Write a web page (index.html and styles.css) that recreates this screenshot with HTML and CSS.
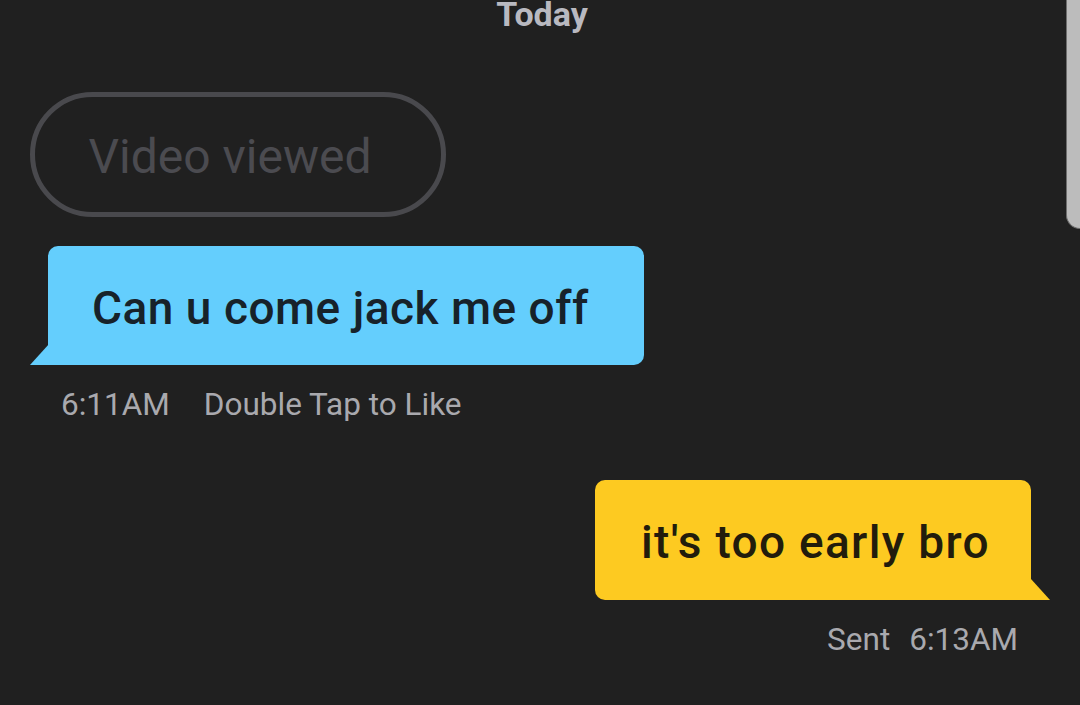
FILE: index.html
```html
<!DOCTYPE html>
<html>
<head>
<meta charset="utf-8">
<link rel="stylesheet" href="styles.css">
</head>
<body>
<div class="chat">
  <div class="day">Today</div>
  <div class="pill">Video viewed</div>
  <div class="msg in">
    <div class="bubble blue">Can u come jack me off</div>
    <div class="meta"><span>6:11AM</span><span>Double Tap to Like</span></div>
  </div>
  <div class="msg out">
    <div class="bubble yellow">it's too early bro</div>
    <div class="meta"><span>Sent</span><span>6:13AM</span></div>
  </div>
</div>
<div class="scrollbar"></div>
</body>
</html>
```
FILE: styles.css
```css
html, body {
  margin: 0;
  padding: 0;
  background: #202020;
  width: 1080px;
  height: 705px;
  overflow: hidden;
}
body {
  font-family: Roboto, "DejaVu Sans", sans-serif;
  position: relative;
}
.chat {
  display: flex;
  flex-direction: column;
}
.day {
  align-self: center;
  font-weight: 700;
  font-size: 34px;
  line-height: 34px;
  color: #b9b9c0;
  margin-top: -3px;
  margin-left: 4px;
}
.pill {
  align-self: flex-start;
  margin: 61px 0 0 30px;
  box-sizing: border-box;
  width: 416px;
  height: 125px;
  border: 5px solid #49494d;
  border-radius: 63px;
  color: #4b4b50;
  font-size: 48px;
  display: flex;
  align-items: center;
  justify-content: center;
  padding: 4px 16px 0 0;
}
.msg {
  display: flex;
  flex-direction: column;
}
.msg.in {
  align-items: flex-start;
  margin: 29px 0 0 48px;
}
.msg.out {
  align-items: flex-end;
  margin: 56px 49px 0 0;
}
.bubble {
  position: relative;
  box-sizing: border-box;
  height: 119px;
  display: flex;
  align-items: center;
  justify-content: flex-start;
  padding: 4px 0 0 44px;
  font-size: 46px;
  letter-spacing: 0.5px;
  font-weight: 500;
  color: #17222a;
}
.bubble::after {
  content: "";
  position: absolute;
  bottom: 0;
  width: 19px;
  height: 21px;
}
.blue {
  width: 596px;
  background: #64cefd;
  border-radius: 10px 10px 10px 0;
}
.blue::after {
  left: -18px;
  background: #64cefd;
  clip-path: polygon(100% 0, 100% 100%, 0 100%);
}
.yellow {
  width: 436px;
  height: 120px;
  padding-left: 46px;
  letter-spacing: 1.3px;
  background: #fdca21;
  color: #221c0c;
  border-radius: 10px 10px 0 10px;
}
.yellow::after {
  right: -19px;
  background: #fdca21;
  clip-path: polygon(0 0, 100% 100%, 0 100%);
}
.meta {
  display: flex;
  color: #a9a9ae;
  font-size: 31.5px;
  line-height: 38px;
}
.in .meta {
  gap: 34px;
  margin: 21px 0 0 13px;
}
.out .meta {
  gap: 19px;
  margin: 21px 13px 0 0;
}
.scrollbar {
  position: absolute;
  top: 0;
  right: 0;
  width: 13px;
  height: 228px;
  background: #bcbcbc;
  border-left: 1px solid #6e6e6e;
  border-bottom: 1px solid #6e6e6e;
  border-bottom-left-radius: 14px;
}
```
